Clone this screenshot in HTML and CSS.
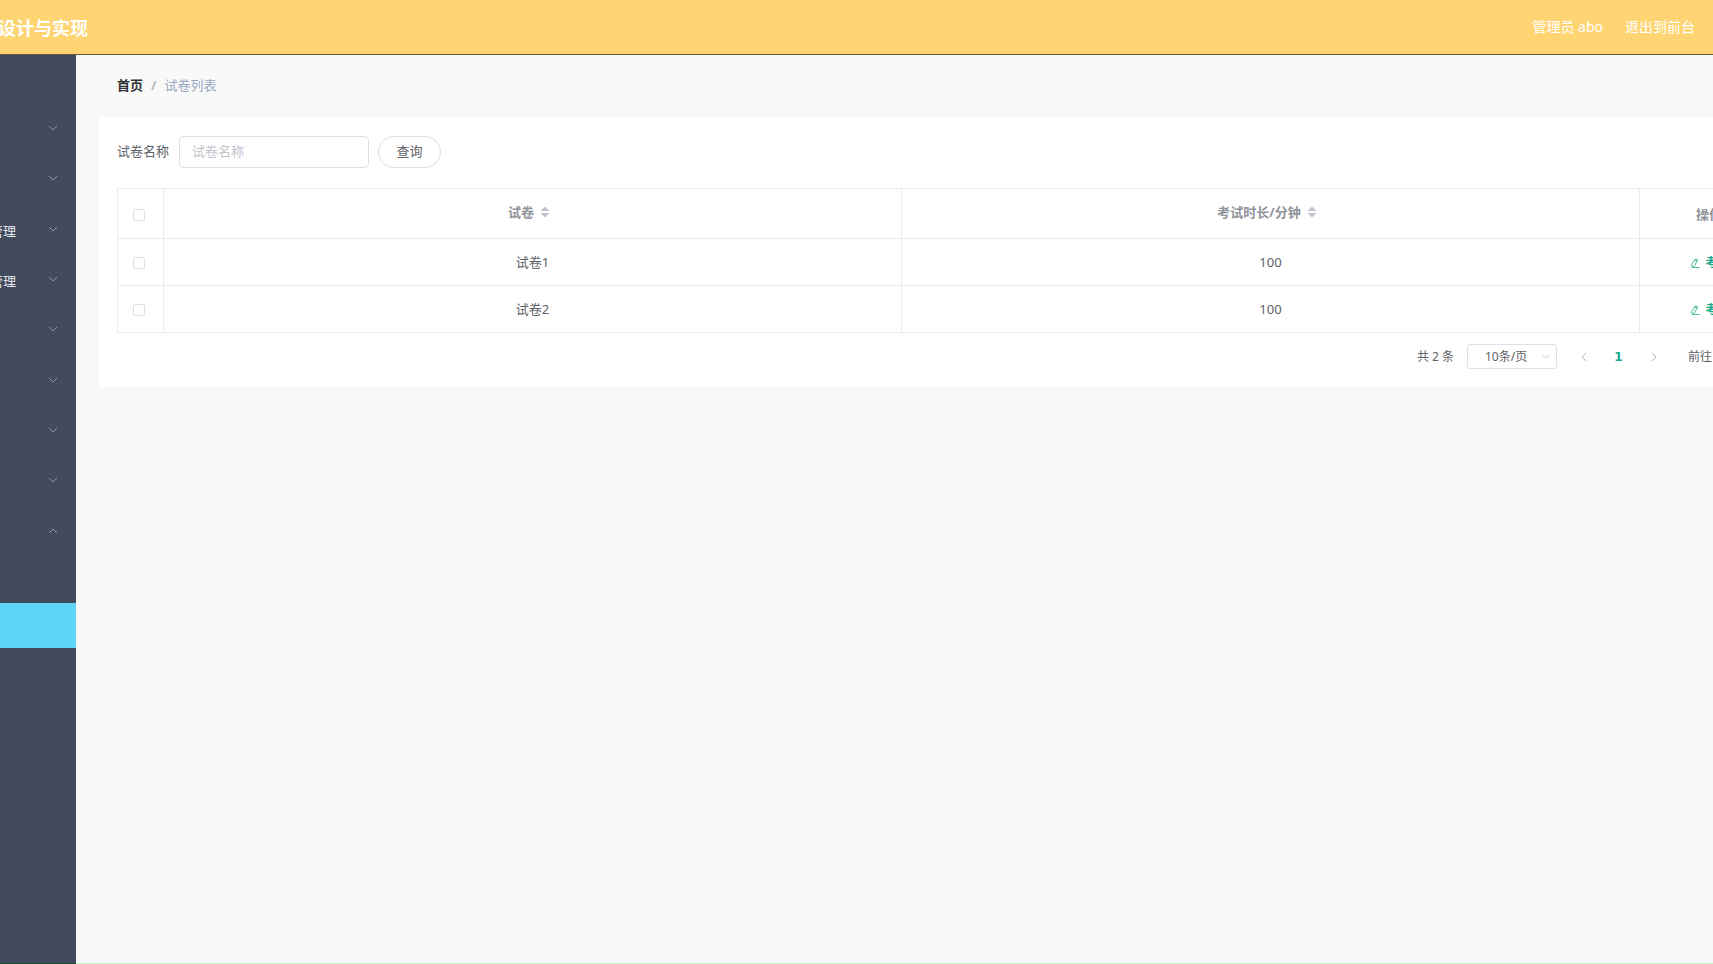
FILE: index.html
```html
<!DOCTYPE html>
<html lang="zh-CN">
<head>
<meta charset="utf-8">
<title>试卷列表</title>
<link rel="stylesheet" href="styles.css">
</head>
<body>
<svg class="defs" aria-hidden="true">
  <symbol id="chevron" viewBox="0 0 10 6"><path d="M1 1l4 4 4-4" fill="none" stroke="currentColor"/></symbol>
  <symbol id="sort" viewBox="0 0 10 12"><path d="M.5 5L5 .5 9.500 5zM.5 7L5 11.500 9.500 7z" fill="currentColor"/></symbol>
  <symbol id="edit" viewBox="0 0 10 10"><path d="M5.400.8l2.200 1-3 6-2.600 1.500-.4-2.800zM3 9.500h6.500M4.700 2.200l2.200 1" fill="none" stroke="currentColor" stroke-width=".8"/></symbol>
</svg>
<header class="topbar">
  <h1 class="title">设计与实现</h1>
  <nav class="user">
    <span>管理员 abo</span>
    <a href="#">退出到前台</a>
  </nav>
</header>
<div class="shell">
  <aside class="sidebar">
    <nav class="menu">
      <button class="item" aria-label="菜单 1"><svg class="arrow"><use href="#chevron"/></svg></button>
      <button class="item" aria-label="菜单 2"><svg class="arrow"><use href="#chevron"/></svg></button>
      <button class="item"><span class="item-label">管理</span><svg class="arrow"><use href="#chevron"/></svg></button>
      <button class="item"><span class="item-label">管理</span><svg class="arrow"><use href="#chevron"/></svg></button>
      <button class="item" aria-label="菜单 5"><svg class="arrow"><use href="#chevron"/></svg></button>
      <button class="item" aria-label="菜单 6"><svg class="arrow"><use href="#chevron"/></svg></button>
      <button class="item" aria-label="菜单 7"><svg class="arrow"><use href="#chevron"/></svg></button>
      <button class="item" aria-label="菜单 8"><svg class="arrow"><use href="#chevron"/></svg></button>
      <button class="item open" aria-label="菜单 9"><svg class="arrow"><use href="#chevron"/></svg></button>
    </nav>
    <a class="subitem" href="#" aria-label="子菜单 1"></a>
    <a class="subitem active" href="#" aria-label="子菜单 2"></a>
  </aside>
  <main class="main">
    <nav class="crumbs">
      <a class="home" href="#">首页</a><span class="slash">/</span><span class="here">试卷列表</span>
    </nav>
    <section class="panel">
      <form class="search">
        <label for="name">试卷名称</label>
        <input class="field" id="name" type="text" placeholder="试卷名称">
        <button class="query" type="button">查询</button>
      </form>
      <table class="grid">
        <colgroup><col class="col-check"><col><col><col class="col-action"></colgroup>
        <thead>
          <tr>
            <th><input class="check" type="checkbox" aria-label="全选"></th>
            <th class="sortable"><span class="head">试卷<svg class="sort"><use href="#sort"/></svg></span></th>
            <th class="sortable"><span class="head">考试时长/分钟<svg class="sort"><use href="#sort"/></svg></span></th>
            <th>操作</th>
          </tr>
        </thead>
        <tbody>
          <tr>
            <td><input class="check" type="checkbox" aria-label="选择试卷1"></td>
            <td>试卷1</td>
            <td>100</td>
            <td><button class="action" type="button"><svg class="edit"><use href="#edit"/></svg>考试</button></td>
          </tr>
          <tr>
            <td><input class="check" type="checkbox" aria-label="选择试卷2"></td>
            <td>试卷2</td>
            <td>100</td>
            <td><button class="action" type="button"><svg class="edit"><use href="#edit"/></svg>考试</button></td>
          </tr>
        </tbody>
      </table>
      <div class="pager">
        <span>共 2 条</span>
        <span class="size">
          <select class="size-select" aria-label="每页条数"><option>10条/页</option></select>
          <svg class="size-arrow"><use href="#chevron"/></svg>
        </span>
        <button class="page" type="button" aria-label="上一页"><svg class="prev"><use href="#chevron"/></svg></button>
        <button class="page current" type="button">1</button>
        <button class="page" type="button" aria-label="下一页"><svg class="next"><use href="#chevron"/></svg></button>
        <span class="jump">前往</span>
      </div>
    </section>
  </main>
</div>
</body>
</html>
```
FILE: styles.css
```css
* { box-sizing: border-box; }

body {
  display: flex;
  flex-direction: column;
  min-height: 100vh;
  margin: 0;
  overflow: hidden;
  background: #f6f8fa;
  color: #606266;
  font: 13px/20px "Noto Sans", "Noto Sans CJK SC", sans-serif;
}

button, input, select { margin: 0; font: inherit; color: inherit; }
button { padding: 0; border: 0; background: none; }
a { color: inherit; text-decoration: none; }
.defs { display: none; }

.topbar {
  display: flex;
  align-items: center;
  justify-content: space-between;
  height: 55px;
  padding-right: 18px;
  border-bottom: 1px solid #6b5534;
  background: #ffd574;
  color: #fff;
}
.title { margin: 0 0 0 -2px; padding-top: 2px; font-size: 18px; line-height: 24px; }
.user { display: flex; gap: 22px; font-size: 14px; }

.shell { display: flex; flex: 1; }

.sidebar {
  flex: none;
  width: 76px;
  padding-top: 48px;
  border-bottom: 1px solid #1f4a38;
  background: #424a5d;
  color: #e4e7ee;
}
.menu { display: grid; grid-template-rows: repeat(9, 1fr); min-height: 453px; }
.item {
  display: flex;
  align-items: center;
  justify-content: flex-end;
  gap: 32px;
  width: 100%;
  padding-right: 18px;
  overflow: hidden;
}
.item-label { flex: none; padding-top: 4px; }
.arrow { flex: none; width: 10px; height: 6px; color: #8b93a3; }
.open .arrow { transform: rotate(180deg); }
.subitem { display: block; height: 45px; }
.active { margin-top: 2px; background: #5cd6f4; }

.main {
  flex: 1;
  min-width: 0;
  margin-right: -84px;
  padding: 5px 0 0 23px;
  border-bottom: 1px solid #c8f2cc;
}
.crumbs {
  display: flex;
  align-items: center;
  height: 50px;
  margin-bottom: 7px;
  padding-left: 18px;
  background: #f9f9f9;
}
.home { color: #303133; font-weight: 700; }
.slash { padding: 0 8px; color: #b4b9c2; font-weight: 700; }
.here { color: #97a8be; }

.panel { padding: 19px 18px 18px; background: #fff; }
.search { display: flex; align-items: center; margin-bottom: 20px; }
.search label { padding-bottom: 2px; }
.field {
  width: 190px;
  height: 32px;
  margin: 0 9px 0 10px;
  padding: 0 12px 2px;
  border: 1px solid #dcdfe6;
  border-radius: 4px;
  background: #fff;
}
.field::placeholder { color: #c0c4cc; }
.query {
  width: 63px;
  height: 32px;
  padding-bottom: 2px;
  border: 1px solid #dcdfe6;
  border-radius: 16px;
}

.grid {
  width: 100%;
  table-layout: fixed;
  border-collapse: separate;
  border-spacing: 0;
  border: solid #ebebeb;
  border-width: 1px 0 0 1px;
  text-align: center;
}
.col-check { width: 46px; }
.col-action { width: 139px; }
.grid th, .grid td {
  height: 47px;
  padding: 0;
  border: solid #ebebeb;
  border-width: 0 1px 1px 0;
}
.grid th { height: 50px; color: #909399; font-weight: 700; }
.grid .sortable { padding: 0 7px 4px 0; }
.head { display: inline-flex; align-items: center; gap: 6px; }
.sort { width: 10px; height: 12px; color: #c0c4cc; }
.check {
  display: block;
  width: 12px;
  height: 12px;
  margin: 2px auto 0 15px;
  appearance: none;
  border: 1px solid #dcdfe6;
  border-radius: 2px;
  background: #fff;
}
.action {
  display: inline-flex;
  align-items: center;
  gap: 5px;
  padding: 2px 0 0 2px;
  color: #18a689;
  font-size: 12px;
  font-weight: 700;
}
.edit { width: 10px; height: 10px; }

.pager {
  display: flex;
  align-items: center;
  justify-content: flex-end;
  padding-top: 11px;
  font-size: 12px;
}
.size { display: grid; align-items: center; margin: 0 9px 0 13px; }
.size-select, .size-arrow { grid-area: 1 / 1; }
.size-select {
  width: 90px;
  height: 25px;
  padding: 0 0 0 17px;
  appearance: none;
  border: 1px solid #dcdfe6;
  border-radius: 3px;
  background: #fff;
}
.size-arrow { justify-self: end; width: 8px; height: 5px; margin-right: 7px; color: #c0c4cc; pointer-events: none; }
.page {
  display: flex;
  align-items: center;
  justify-content: center;
  width: 35px;
  height: 24px;
  color: #b0b4bc;
}
.current { color: #18a689; font-family: "DejaVu Sans", sans-serif; font-weight: 700; }
.prev, .next { width: 10px; height: 6px; }
.prev { transform: rotate(90deg); }
.next { transform: rotate(-90deg); }
.jump { width: 91px; margin-left: 17px; }
```
